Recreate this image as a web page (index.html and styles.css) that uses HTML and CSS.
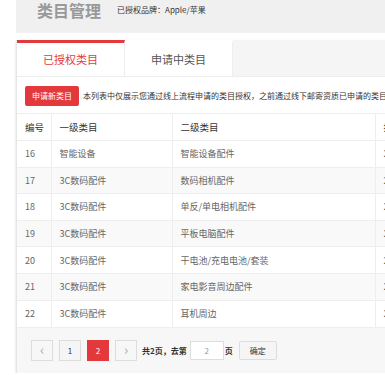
FILE: index.html
```html
<!DOCTYPE html>
<html lang="zh-CN">
<head>
  <meta charset="UTF-8">
  <title>类目管理</title>
  <link rel="stylesheet" href="styles.css">
</head>
<body>

<div class="page">
  <!-- 标题 -->
  <div class="head">
    <span class="title">类目管理</span>
    <span class="brand">已授权品牌：Apple/苹果</span>
  </div>

  <div class="panel">
    <div class="tabs">
      <div class="tab active">已授权类目</div>
      <div class="tab">申请中类目</div>
    </div>

    <div class="toolbar">
      <button class="btn-red">申请新类目</button>
      <span class="tip">本列表中仅展示您通过线上流程申请的类目授权，之前通过线下邮寄资质已申请的类目授权请联系招商经理查询。</span>
    </div>

    <table class="list">
      <thead>
        <tr><th class="c1">编号</th><th class="c2">一级类目</th><th class="c3">二级类目</th><th class="c4">授权时间</th></tr>
      </thead>
      <tbody>
        <tr><td>16</td><td>智能设备</td><td>智能设备配件</td><td>2017-06-12</td></tr>
        <tr class="odd"><td>17</td><td>3C数码配件</td><td>数码相机配件</td><td>2017-06-12</td></tr>
        <tr><td>18</td><td>3C数码配件</td><td>单反/单电相机配件</td><td>2017-06-12</td></tr>
        <tr class="odd"><td>19</td><td>3C数码配件</td><td>平板电脑配件</td><td>2017-06-12</td></tr>
        <tr><td>20</td><td>3C数码配件</td><td>干电池/充电电池/套装</td><td>2017-06-12</td></tr>
        <tr class="odd"><td>21</td><td>3C数码配件</td><td>家电影音周边配件</td><td>2017-06-12</td></tr>
        <tr><td>22</td><td>3C数码配件</td><td>耳机周边</td><td>2017-06-12</td></tr>
      </tbody>
    </table>

    <div class="pager">
      <span class="pg prev">&lsaquo;</span>
      <span class="pg">1</span>
      <span class="pg cur">2</span>
      <span class="pg next">&rsaquo;</span>
      <span class="total">共2页，去第</span>
      <input class="goto" type="text" value="2">
      <span class="unit">页</span>
      <button class="ok">确定</button>
    </div>
  </div>
</div>

</body>
</html>
```

FILE: styles.css
```css
html, body { margin: 0; overflow: hidden; background: #fff; }
body { font-family: "Microsoft YaHei", "Noto Sans CJK SC", sans-serif; color: #333; }

.page { margin-left: 16px; width: 900px; }

.head {
  height: 33px;
  background: #f0f0f0;
  padding-left: 21px;
  display: flex;
  align-items: center;
  box-sizing: border-box;
  padding-bottom: 13px;
}
.title { font-size: 16px; font-weight: bold; color: #999; line-height: 20px; }
.brand { font-size: 8px; color: #333; margin-left: 16px; line-height: 20px; }

.panel {
  margin-top: 7px;
  border-left: 1px solid #e6e6e6;
  box-shadow: 0 1px 2px rgba(0,0,0,.18);
}

.tabs { display: flex; height: 37px; background: #f5f5f5; border-bottom: 1px solid #eee; box-sizing: border-box; }
.tab {
  width: 108px;
  background: #fff;
  border-right: 1px solid #eee;
  border-top: 3px solid transparent;
  box-sizing: border-box;
  text-align: center;
  font-size: 11px;
  line-height: 32px;
  color: #555;
}
.tab.active { border-top-color: #e4393c; color: #e4393c; }

.toolbar {
  display: flex;
  align-items: center;
  padding: 8px 8px 7px;
  height: 36px;
  box-sizing: border-box;
  white-space: nowrap;
}
.btn-red {
  height: 20px;
  width: 54px;
  padding: 0;
  border: 0;
  border-radius: 2px;
  background: #e4393c;
  color: #fff;
  font-family: inherit;
  font-size: 8px;
}
.tip { font-size: 8px; margin-left: 4px; color: #333; }

.list { border-collapse: collapse; table-layout: fixed; width: 900px; }
.list th, .list td {
  height: 26.6px;
  padding: 0 8px;
  border-top: 1px solid #eee;
  border-right: 1px solid #eee;
  text-align: left;
  font-size: 9px;
  white-space: nowrap;
  box-sizing: border-box;
}
.list th { font-weight: normal; color: #333; height: 27px; font-size: 9.5px; }
.list td { color: #666; }
.list tr.odd td { background: #f9f9f9; }
.c1 { width: 34px; }
.c2 { width: 121px; }
.c3 { width: 203px; }

.pager {
  display: flex;
  align-items: center;
  height: 46px;
  padding: 0 14px;
  background: #f7f7f7;
  border-top: 1px solid #eee;
  box-sizing: border-box;
  font-size: 8px;
}
.pg {
  width: 22px;
  height: 21px;
  border: 1px solid #ddd;
  box-sizing: border-box;
  background: #f5f5f5;
  text-align: center;
  line-height: 19px;
  color: #333;
  margin-right: 6px;
}
.pg.prev, .pg.next { font-size: 14px; color: #aaa; background: #f7f7f7; line-height: 17px; }
.pg.cur { background: #e4393c; border-color: #e4393c; color: #fff; }
.pg.next { margin-right: 5px; }
.total { color: #333; font-weight: bold; }
.goto {
  width: 34px;
  height: 19px;
  margin-left: 3px;
  padding: 0;
  border: 1px solid #ddd;
  box-sizing: border-box;
  text-align: center;
  font-size: 8px;
  color: #999;
  font-family: inherit;
}
.unit { margin-left: 1px; color: #333; font-weight: bold; }
.ok {
  width: 38px;
  height: 19px;
  margin-left: 6px;
  padding: 0;
  border: 1px solid #ddd;
  border-radius: 2px;
  background: #f5f5f5;
  font-family: inherit;
  font-size: 8px;
  color: #333;
}
```
